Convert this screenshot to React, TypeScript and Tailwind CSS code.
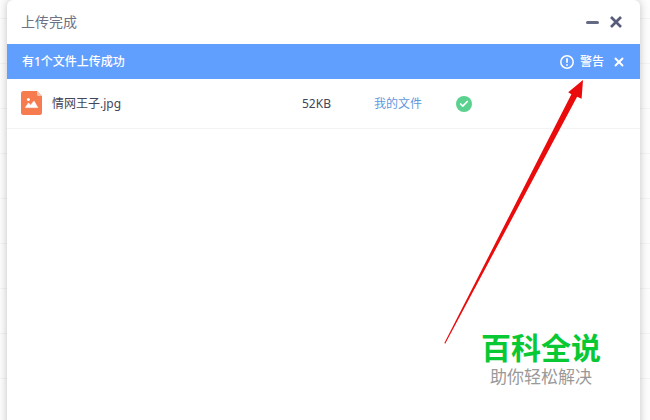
import { Check, X } from "lucide-react";

const ROW_LINES = Array.from({ length: 10 }, (_, i) => i);

function ImageFileIcon() {
  return (
    <svg viewBox="0 0 21 24" className="mb-0.5 h-6 w-[21px] shrink-0" aria-hidden="true">
      <path d="M2.5 0H16L21 5V21.5A2.5 2.5 0 0 1 18.5 24H2.5A2.5 2.5 0 0 1 0 21.5V2.5A2.5 2.5 0 0 1 2.5 0Z" fill="#f67c4f" />
      <path d="M16 0L21 5H17.5A1.5 1.5 0 0 1 16 3.5Z" fill="#fbc4ae" />
      <circle cx="7.4" cy="8.4" r="1.5" fill="#fff" />
      <path d="M4.3 16.6L7.5 11.9L9.6 14.2L13 10L16.8 16.6Z" fill="#fff" stroke="#fff" strokeWidth="0.6" strokeLinejoin="round" />
    </svg>
  );
}

function WarningIcon() {
  return (
    <svg viewBox="0 0 14 14" className="size-3.5" fill="none" stroke="#fff" aria-hidden="true">
      <circle cx="7" cy="7" r="6.2" strokeWidth="1.5" />
      <path d="M7 3.3V7.8M7 9.2V10.8" strokeWidth="1.7" />
    </svg>
  );
}

function Arrow() {
  return (
    <svg
      viewBox="0 0 650 420"
      className="pointer-events-none absolute left-0 top-0 h-[420px] w-[650px]"
      aria-hidden="true"
    >
      <path d="M444.4 343L571.4 94.2L568.2 92.2L583 80L581.6 98.8L577.1 96.7L445.2 343.8Z" fill="#ea0c0c" />
    </svg>
  );
}

export default function App() {
  return (
    <div
      className={`relative flex h-[420px] w-[650px] overflow-hidden bg-[#fdfdfd] pl-[7px] font-["Noto_Sans","Noto_Sans_CJK_SC",sans-serif]`}
    >
      {/* table rows of the page behind the dialog */}
      <div className="absolute inset-0 -top-[26px]">
        {ROW_LINES.map((i) => (
          <div key={i} className="h-[45px] border-b border-[#f4f4f4]" />
        ))}
      </div>

      <section className="relative flex h-[440px] w-[633px] flex-col rounded-t-[6px] bg-white shadow-[0_0_9px_rgba(0,0,0,0.24)]">
        <header className="flex h-11 items-center justify-between pl-3.5 pr-[17px]">
          <h1 className="text-sm leading-5 text-[#6d7286]">上传完成</h1>
          <div className="flex items-center gap-2.5 text-[#565c79]">
            <button aria-label="最小化" className="h-[3px] w-[13px] rounded-full bg-[#646a84]" />
            <button aria-label="关闭">
              <svg viewBox="0 0 14 14" className="size-3.5" fill="none" stroke="currentColor" strokeWidth="2.7">
                <path d="M2 2L12 12M12 2L2 12" />
              </svg>
            </button>
          </div>
        </header>

        <div className="flex h-[35px] items-center justify-between bg-[#619ffe] pl-[15px] pr-3.5 text-xs text-white">
          <span className="font-medium">有1个文件上传成功</span>
          <div className="flex items-center">
            <WarningIcon />
            <span className="ml-1.5 font-medium">警告</span>
            <button aria-label="关闭提示" className="ml-2">
              <X className="size-3.5" strokeWidth={3.2} />
            </button>
          </div>
        </div>

        <div className="flex h-[50px] items-center border-b border-[#f3f3f3] pl-3.5 text-xs text-[#424658]">
          <ImageFileIcon />
          <span className="ml-2.5 w-[250px]">情网王子.jpg</span>
          <span className="w-[72px]">52KB</span>
          <span className="w-[82px] text-[#5e98df]">我的文件</span>
          <span className="grid size-4 place-items-center rounded-full bg-[#5bd18f] text-white">
            <Check className="size-2.5" strokeWidth={4} />
          </span>
        </div>
      </section>

      <Arrow />

      <div className="absolute left-[481px] top-[331px] w-[120px] text-center">
        <p className="text-[30px] font-bold leading-[34px] text-[#08c934]">百科全说</p>
        <p className="whitespace-nowrap pt-[3px] text-[17px] leading-[18px] text-[#999]">助你轻松解决</p>
      </div>
    </div>
  );
}
